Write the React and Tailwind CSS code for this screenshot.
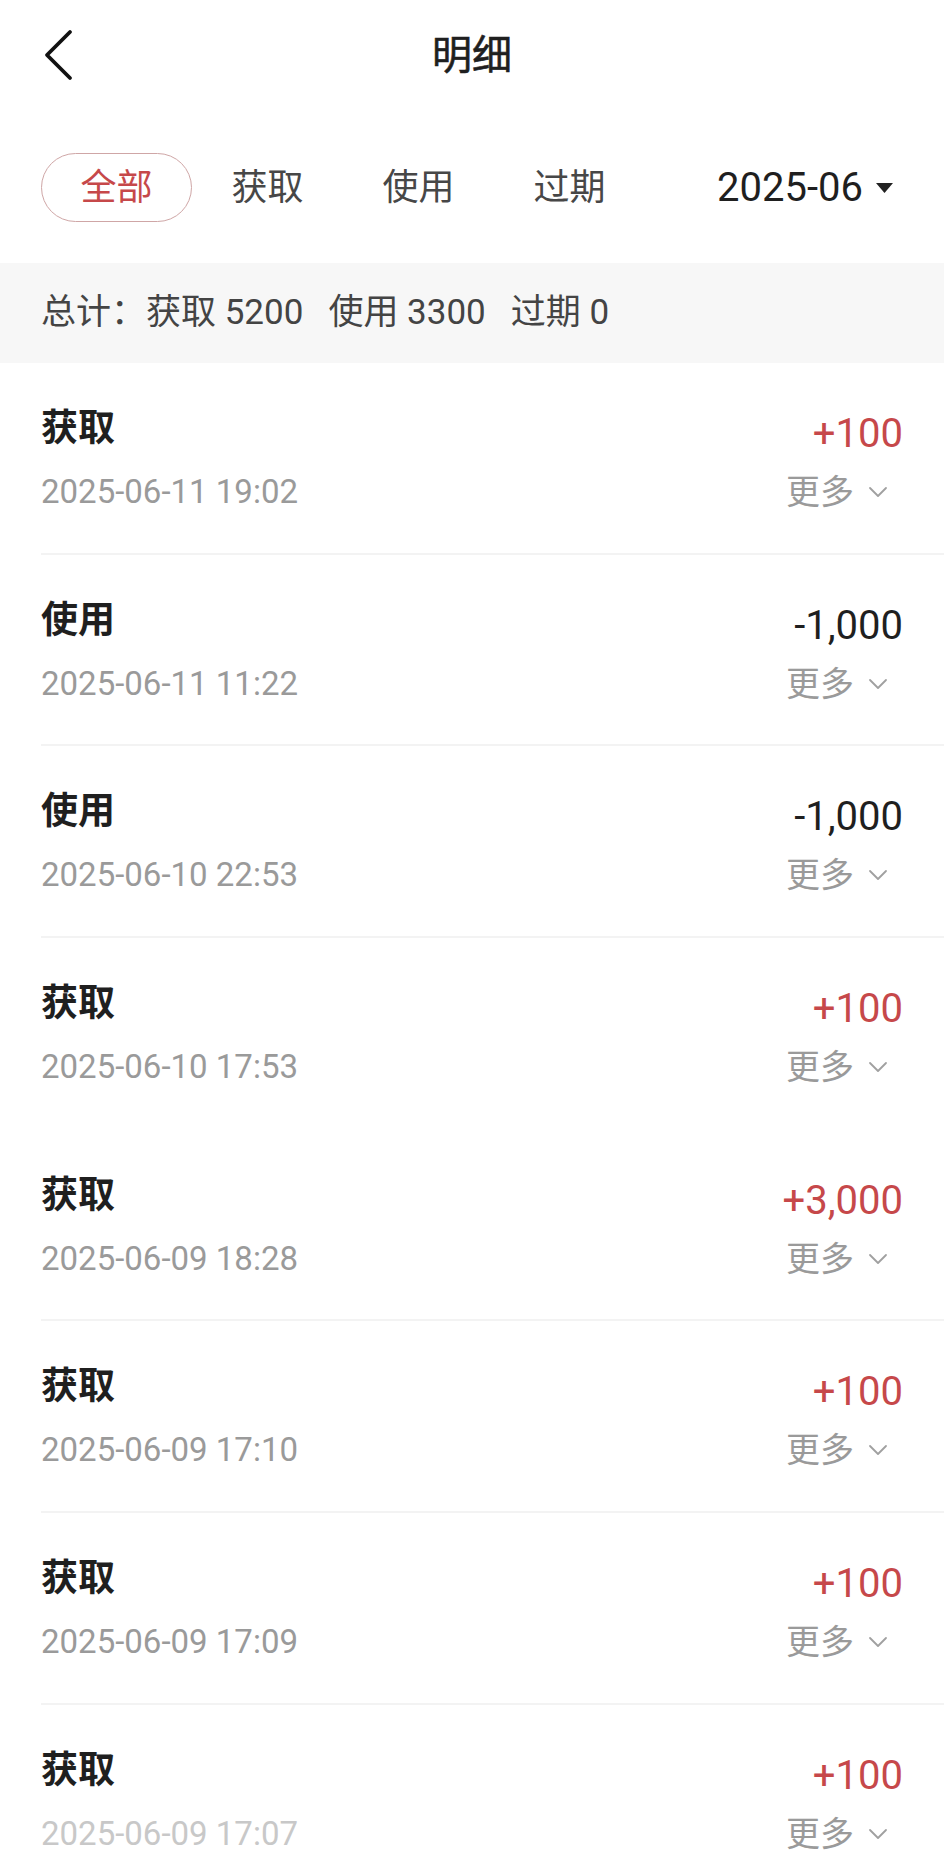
import React from 'react';

const records = [
  { type: '获取', time: '2025-06-11 19:02', amount: '+100', line: true },
  { type: '使用', time: '2025-06-11 11:22', amount: '-1,000', line: true },
  { type: '使用', time: '2025-06-10 22:53', amount: '-1,000', line: true },
  { type: '获取', time: '2025-06-10 17:53', amount: '+100', line: false },
  { type: '获取', time: '2025-06-09 18:28', amount: '+3,000', line: true },
  { type: '获取', time: '2025-06-09 17:10', amount: '+100', line: true },
  { type: '获取', time: '2025-06-09 17:09', amount: '+100', line: true },
  { type: '获取', time: '2025-06-09 17:07', amount: '+100', line: false, faded: true },
];

const tabs = ['全部', '获取', '使用', '过期'];

const BackIcon = () => (
  <svg width="32" height="54" viewBox="0 0 32 54" fill="none">
    <polyline points="27,3 4,26 27,49" stroke="#111" strokeWidth="3.8" strokeLinecap="round" strokeLinejoin="round" />
  </svg>
);

const MoreChevron = () => (
  <svg width="20" height="12" viewBox="0 0 20 12" fill="none">
    <polyline points="2,2 10,10 18,2" stroke="#a0a0a0" strokeWidth="1.8" strokeLinecap="round" strokeLinejoin="round" />
  </svg>
);

const Row = ({ item }) => {
  const positive = item.amount.startsWith('+');
  return (
    <div className={`ml-[41px] pr-[41px] h-[191.7px] shrink-0 flex justify-between border-b-2 ${item.line ? 'border-[#f3f3f3]' : 'border-transparent'}`}>
      <div className="flex flex-col">
        <div className="mt-[44px] text-[37px] leading-[44px] font-semibold text-[#1f1f1f]">{item.type}</div>
        <div className={`mt-[21px] text-[33px] leading-[40px] ${item.faded ? 'text-[#c8c8c8]' : 'text-[#9a9a9a]'}`}>{item.time}</div>
      </div>
      <div className="flex flex-col items-end">
        <div className={`mt-[49px] text-[40px] leading-[44px] ${positive ? 'text-[#c6484a]' : 'text-[#1f1f1f]'}`}>{item.amount}</div>
        <div className="mt-[16px] mr-[15px] flex items-center gap-[14px] text-[34px] leading-[40px] text-[#9a9a9a]">
          <span>更多</span>
          <MoreChevron />
        </div>
      </div>
    </div>
  );
};

export default function App() {
  return (
    <div className="w-[944px] h-[1854px] overflow-hidden bg-white flex flex-col" style={{ fontFamily: 'Roboto, "Noto Sans CJK SC", sans-serif' }}>
      {/* header */}
      <div className="relative h-[108px] shrink-0 flex items-center justify-center pt-[4px]">
        <div className="absolute left-[43px] top-[29px]">
          <BackIcon />
        </div>
        <h1 className="text-[40px] font-normal text-[#1f1f1f] [-webkit-text-stroke:0.6px_#1f1f1f]">明细</h1>
      </div>

      {/* tabs */}
      <div className="shrink-0 flex items-center pl-[41px] pr-[51px] pt-[45px] pb-[41px]">
        {tabs.map((t, i) => (
          <div
            key={t}
            className={`w-[151px] h-[69px] flex items-center justify-center rounded-full text-[36px] ${i === 0 ? 'border border-[#cfa6a6] text-[#c6484a]' : 'text-[#474747]'}`}
          >
            {t}
          </div>
        ))}
        <div className="ml-auto flex items-center gap-[13px] text-[40px] text-[#1f1f1f]">
          <span>2025-06</span>
          <svg width="17" height="10" viewBox="0 0 17 10">
            <polygon points="0,0 17,0 8.5,10" fill="#222" />
          </svg>
        </div>
      </div>

      {/* summary */}
      <div className="h-[100px] shrink-0 bg-[#f7f7f7] px-[41px] flex items-center gap-[25px] text-[35px] text-[#444]">
        <span>总计：获取 5200</span>
        <span>使用 3300</span>
        <span>过期 0</span>
      </div>

      {/* list */}
      <div className="flex flex-col">
        {records.map((r, i) => (
          <Row key={i} item={r} />
        ))}
      </div>
    </div>
  );
}
